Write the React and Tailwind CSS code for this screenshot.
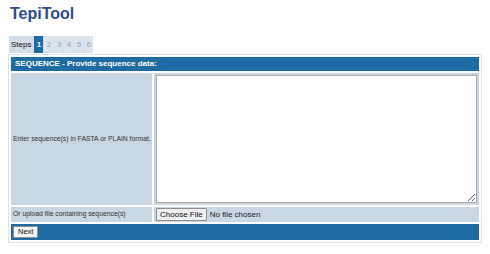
const steps = [1, 2, 3, 4, 5, 6];

export default function App() {
  return (
    <div className="w-[490px] h-[254px] bg-white font-['Liberation_Sans',Arial,sans-serif] text-[#333]">
      <h1 className="pl-[10px] pt-[5px] text-[16px] font-bold leading-[18px] text-[#2d4b8b]">TepiTool</h1>

      {/* step tabs */}
      <div className="ml-[9px] mt-[13px] flex h-[17px] w-fit gap-[1px] bg-[#d3dde7] text-[8px] leading-[17px]">
        <span className="px-[2px] text-[#111]">Steps</span>
        {steps.map((s) => (
          <span
            key={s}
            className={
              s === 1
                ? 'w-[9px] bg-[#1e6ba1] text-center font-bold text-white'
                : 'w-[9px] bg-[#dbe3ec] text-center text-[#98a6b4]'
            }
          >
            {s}
          </span>
        ))}
      </div>

      <div className="ml-[8px] mt-[1px] w-[474px] border border-[#dde3ea] bg-white p-[2px]">
        <div className="flex flex-col gap-[2px]">
          <div className="h-[14px] bg-[#1e6ba1] pl-[4px] text-[8px] font-bold leading-[14px] text-white">
            SEQUENCE - Provide sequence data:
          </div>

          <div className="flex gap-[2px]">
            <div className="flex w-[141px] items-center whitespace-nowrap bg-[#c9d7e4] pl-[2px] text-[6.8px] text-[#333]">
              Enter sequence(s) in FASTA or PLAIN format.
            </div>
            <div className="flex-1 bg-[#c9d7e4] p-[2px]">
              <textarea className="block h-[128px] w-full resize-y border border-[#a9a9a9] bg-white" />
            </div>
          </div>

          <div className="flex h-[15px] gap-[2px]">
            <div className="flex w-[141px] items-center whitespace-nowrap bg-[#c9d7e4] pl-[2px] text-[6.8px] text-[#333]">
              Or upload file containing sequence(s)
            </div>
            <div className="flex flex-1 items-center gap-[3px] bg-[#c9d7e4] pl-[2px] text-[8px]">
              <span className="h-[13px] rounded-[1px] border border-[#8f8f8f] bg-[#efefef] px-[3px] leading-[11px] text-[#111]">
                Choose File
              </span>
              <span className="text-[#222]">No file chosen</span>
            </div>
          </div>

          <div className="flex h-[16px] items-center bg-[#1e6ba1] pl-[2px]">
            <span className="h-[12px] border border-[#8f8f8f] bg-[#f3f3f3] px-[4px] text-[7.5px] leading-[10px] text-[#111]">
              Next
            </span>
          </div>
        </div>
      </div>
    </div>
  );
}
